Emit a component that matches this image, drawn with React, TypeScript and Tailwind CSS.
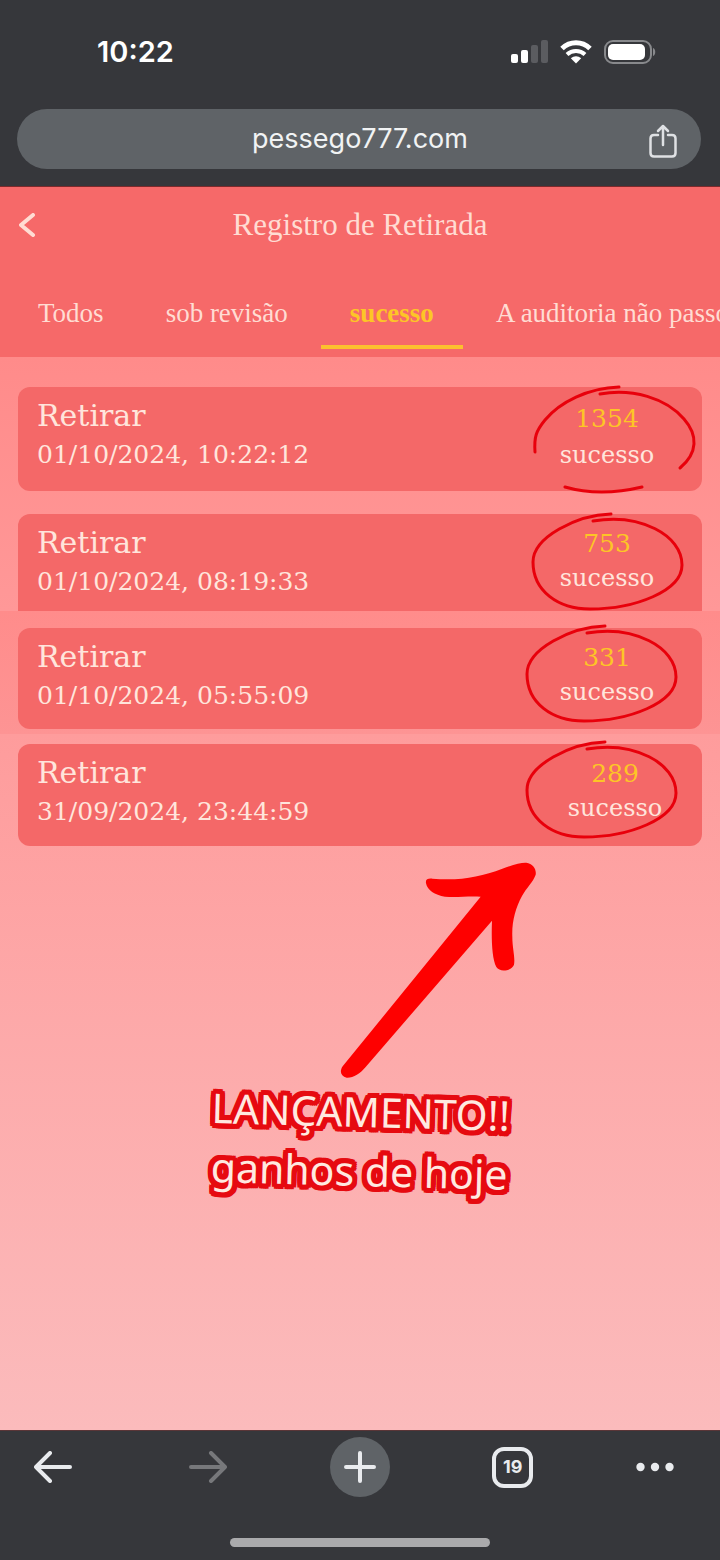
import React from "react";

type Entry = {
  date: string;
  amount: string;
  card: string;
  status: string;
  mark: string;
  open?: boolean;
};

const latest: Entry[] = [
  {
    date: "01/10/2024, 10:22:12",
    amount: "1354",
    card: "rounded-xl pb-4",
    status: "w-[190px] leading-[37px]",
    mark: "right-1 -top-[3px]",
    open: true,
  },
  {
    date: "01/10/2024, 08:19:33",
    amount: "753",
    card: "rounded-t-xl pb-[9px]",
    status: "w-[190px] leading-[34px]",
    mark: "right-4 -top-[3px]",
  },
];

const earlier: Entry[] = [
  {
    date: "01/10/2024, 05:55:09",
    amount: "331",
    card: "rounded-xl pb-[13px]",
    status: "w-[190px] leading-[34px]",
    mark: "right-[22px] -top-[5px]",
  },
];

const previousDay: Entry[] = [
  {
    date: "31/09/2024, 23:44:59",
    amount: "289",
    card: "rounded-xl pb-[14px]",
    status: "w-[174px] leading-[34px]",
    mark: "right-[22px] -top-[5px]",
  },
];

// Solid outline round the caption, built from evenly spread shadows.
const steps = [-5, -3, -1, 1, 3, 5];
const outline = steps
  .flatMap((x) => steps.filter((y) => Math.abs(x) + Math.abs(y) <= 8).map((y) => `${x}px ${y}px 0 #e60a10`))
  .join(", ");

function Circle({ open, className }: { open?: boolean; className: string }) {
  if (open) {
    return (
      <svg aria-hidden="true" className={`absolute ${className}`} width="168" height="112" viewBox="0 0 168 112" fill="none" stroke="#e8000b" strokeWidth="3" strokeLinecap="round">
        <path d="M89 3C58 4 30 18 15 36C6 47 4 53 5 68" />
        <path d="M70 10C102 4 136 14 154 35C168 51 168 69 150 84" />
        <path d="M35 103Q70 113 112 103" />
      </svg>
    );
  }
  return (
    <svg aria-hidden="true" className={`absolute ${className}`} width="156" height="102" viewBox="0 0 156 102" fill="none" stroke="#e8000b" strokeWidth="3" strokeLinecap="round">
      <path d="M81 3C47 4 3 26 3 51C3 80 28 98 60 98C105 98 152 80 152 54C152 24 110 2 63 10" />
    </svg>
  );
}

function Card({ entry }: { entry: Entry }) {
  return (
    <li className={`relative flex justify-between bg-[#f46868] pl-[19px] pt-[10px] font-['DejaVu_Serif',serif] text-[#ffe5dc] ${entry.card}`}>
      <div>
        <h2 className="text-[30px] leading-[38px]">Retirar</h2>
        <time className="block text-[25px] leading-[40px]">{entry.date}</time>
      </div>
      <div className={`pt-[3px] text-center ${entry.status}`}>
        <p className="text-[25px] leading-[inherit] text-[#fdc526]">{entry.amount}</p>
        <p className="text-2xl leading-[inherit]">sucesso</p>
      </div>
      <Circle open={entry.open} className={entry.mark} />
    </li>
  );
}

function StatusBar() {
  return (
    <div className="flex items-center justify-between pl-[97px] pr-16 pt-8">
      <span className="text-[29px] font-semibold leading-10 text-white">10:22</span>
      <div className="flex items-center gap-3">
        <svg aria-hidden="true" width="37" height="24" viewBox="0 0 37 24">
          <rect x="0" y="14" width="7" height="9" rx="2" fill="#fff" />
          <rect x="10" y="10" width="7" height="13" rx="2" fill="#fff" />
          <rect x="20" y="5" width="7" height="18" rx="2" fill="#5b5c60" />
          <rect x="30" y="0" width="7" height="23" rx="2" fill="#5b5c60" />
        </svg>
        <svg aria-hidden="true" width="32" height="24" viewBox="0 0 32 24" fill="none" stroke="#fff" strokeWidth="5">
          <path d="M2 8.500C10 0.800 22 0.800 30 8.500" />
          <path d="M7 14.500C12 9.800 20 9.800 25 14.500" strokeWidth="4" />
          <path d="M16 23.500L10.800 18.300C14 15.500 18 15.500 21.200 18.300Z" fill="#fff" stroke="none" />
        </svg>
        <svg aria-hidden="true" width="52" height="24" viewBox="0 0 52 24">
          <rect x="1" y="1" width="46" height="22" rx="8" fill="none" stroke="#88898c" strokeWidth="2" />
          <rect x="4" y="4" width="37" height="16" rx="5" fill="#fff" />
          <path d="M49 8C52 9 52 15 49 16Z" fill="#88898c" />
        </svg>
      </div>
    </div>
  );
}

const tab = "px-[29px] pb-5 text-[27px] leading-8";

export default function App() {
  return (
    <div className="flex min-h-screen flex-col overflow-hidden bg-[#36373b] font-[Inter,sans-serif]">
      <header className="bg-[#36373b] pb-[17px]">
        <StatusBar />
        <div className="ml-[17px] mr-[19px] mt-[37px] flex items-center rounded-full bg-[#5f6367] pl-[54px] pr-6 text-[#f1f3f4]">
          <a href="https://pessego777.com" className="flex-1 text-center text-[27px] leading-[60px]">pessego777.com</a>
          <button type="button" aria-label="Compartilhar">
            <svg aria-hidden="true" className="mt-1" width="28" height="34" viewBox="0 0 28 34" fill="none" stroke="#dfe1e4" strokeWidth="2.500" strokeLinecap="round" strokeLinejoin="round">
              <path d="M9 11H5Q1.500 11 1.500 14.500V29Q1.500 32.500 5 32.500H23Q26.500 32.500 26.500 29V14.500Q26.500 11 23 11H19M14 21V2M9 7L14 2L19 7" />
            </svg>
          </button>
        </div>
      </header>

      <div className="overflow-hidden border-t border-[#7c2a2c] bg-[#f66969] font-['Liberation_Serif',serif] text-[#ffdcd3]">
        <div className="flex items-center px-[19px] pt-[19px]">
          <button type="button" aria-label="Voltar">
            <svg aria-hidden="true" width="17" height="24" viewBox="0 0 17 24" fill="none" stroke="#ffdcd3" strokeWidth="4" strokeLinecap="round" strokeLinejoin="round">
              <path d="M14 2L2 12L14 22" />
            </svg>
          </button>
          <h1 className="flex-1 pr-[17px] text-center text-[31px] leading-[38px]">Registro de Retirada</h1>
        </div>
        <nav className="flex gap-1 whitespace-nowrap pb-2 pl-[9px] pt-[53px]">
          <button type="button" className={tab}>Todos</button>
          <button type="button" className={tab}>sob revisão</button>
          <button type="button" className={`${tab} border-b-4 border-[#fcc02e] pb-4! font-bold text-[#fdc526]`}>sucesso</button>
          <button type="button" className={tab}>A auditoria não passou</button>
        </nav>
      </div>

      <main className="flex flex-1 flex-col">
        <ul className="flex flex-col gap-[23px] bg-linear-to-b from-[#ff8b8a] to-[#ff9898] px-[18px] pt-[30px]">
          {latest.map((e) => <Card key={e.date} entry={e} />)}
        </ul>
        <ul className="bg-linear-to-b from-[#ff8c8b] to-[#fd9494] px-[18px] pb-[5px] pt-[17px]">
          {earlier.map((e) => <Card key={e.date} entry={e} />)}
        </ul>
        <div className="flex-1 bg-linear-to-b from-[#fe9c9c] to-[#fbbbbc] pt-[10px]">
          <ul className="px-[18px]">
            {previousDay.map((e) => <Card key={e.date} entry={e} />)}
          </ul>
          <div className="flex flex-col items-center pt-4">
            <svg aria-hidden="true" className="ml-[160px]" width="200" height="216" viewBox="480 35 600 648" fill="#fe0000">
              <path d="M738 99C736 87 743 84 757 85C840 92 900 80 967 55C1000 43 1023 36 1039 37C1058 39 1070 56 1067 73C1060 94 1039 113 1026 137C1006 173 995 216 997 260C997 295 1006 320 1002 343C997 360 960 368 949 350C935 324 934 260 936 211L557 650C540 670 520 683 500 682C482 678 478 663 488 648L902 139C860 137 830 142 795 139C764 135 742 119 738 99Z" />
            </svg>
            <p className="rotate-[1.5deg] pt-1 text-center font-['Noto_Sans',sans-serif] text-[41px] leading-[59px] text-[#ffe9e0]" style={{ textShadow: outline }}>
              LANÇAMENTO!!<br />ganhos de hoje
            </p>
          </div>
        </div>
      </main>

      <footer className="border-t border-[#5a3537] bg-[#36373b] pb-[13px] pt-[6px]">
        <div className="flex items-center justify-between pl-[34px] pr-[46px]">
          <button type="button" aria-label="Página anterior" className="w-[52px]">
            <svg aria-hidden="true" width="38" height="32" viewBox="0 0 38 32" fill="none" stroke="#e9ebee" strokeWidth="4" strokeLinecap="round" strokeLinejoin="round"><path d="M16 2L2 16L16 30M2 16H36" /></svg>
          </button>
          <button type="button" aria-label="Próxima página">
            <svg aria-hidden="true" width="38" height="32" viewBox="0 0 38 32" fill="none" stroke="#77787b" strokeWidth="4" strokeLinecap="round" strokeLinejoin="round"><path d="M22 2L36 16L22 30M36 16H2" /></svg>
          </button>
          <button type="button" aria-label="Nova guia" className="flex size-[60px] items-center justify-center rounded-full bg-[#5f6367]">
            <svg aria-hidden="true" width="32" height="32" viewBox="0 0 32 32" stroke="#e9ebee" strokeWidth="4" strokeLinecap="round"><path d="M16 2V30M2 16H30" /></svg>
          </button>
          <button type="button" className="flex size-[41px] items-center justify-center rounded-xl border-4 border-[#e9ebee] text-lg font-bold text-[#e9ebee]">19</button>
          <button type="button" aria-label="Mais opções">
            <svg aria-hidden="true" width="38" height="10" viewBox="0 0 38 10" fill="#e9ebee"><circle cx="4.500" cy="5" r="4.200" /><circle cx="19" cy="5" r="4.200" /><circle cx="33.500" cy="5" r="4.200" /></svg>
          </button>
        </div>
        <div className="mx-auto mt-[41px] h-[9px] w-[36%] rounded-full bg-[#aaaaac]" />
      </footer>
    </div>
  );
}
